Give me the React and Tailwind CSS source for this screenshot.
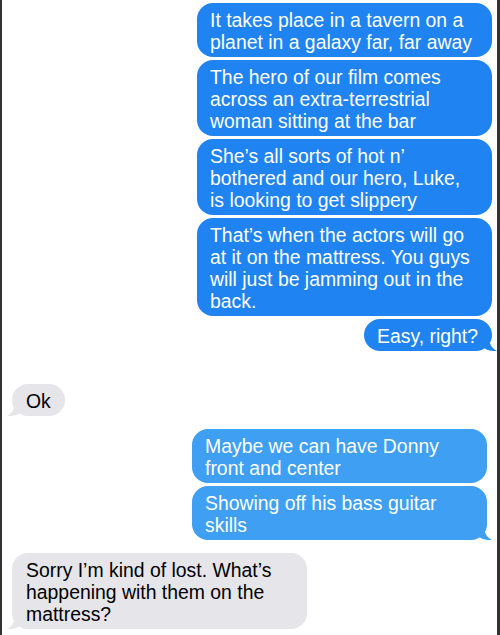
import React from "react";

function Tail({ color, side = "right" }) {
  const pos = side === "right" ? "right-[-5px]" : "left-[-5px] -scale-x-100";
  return (
    <svg
      className={`absolute bottom-0 ${pos}`}
      width="14"
      height="16"
      viewBox="0 0 14 16"
    >
      <path d="M0 0 H6 C6 8 8 13 14 16 C8 16.5 4 15 1 13 H0 Z" fill={color} />
    </svg>
  );
}

function Bubble({ children, className = "", tail, tailColor, tailSide }) {
  return (
    <div className={`relative rounded-[16px] px-[13px] pt-[6px] pb-[4px] text-[19.4px] leading-[22px] ${className}`}>
      {children}
      {tail && <Tail color={tailColor} side={tailSide} />}
    </div>
  );
}

export default function App() {
  const dark = "bg-[#1f84f2] text-white";
  const light = "bg-[#3e9ff3] text-white";
  const grey = "bg-[#e5e5ea] text-black";

  return (
    <div className="w-[500px] h-[635px] overflow-hidden bg-white border-l-2 border-r-[3px] border-[#333333] font-['Liberation_Sans',Arial,sans-serif]">
      <div className="flex flex-col pt-[3px]">
        {/* first run of sent messages */}
        <div className="flex flex-col items-end gap-[3px] pr-[5px]">
          <Bubble className={`w-[295px] ${dark}`}>
            It takes place in a tavern on a<br />planet in a galaxy far, far away
          </Bubble>
          <Bubble className={`w-[295px] ${dark}`}>
            The hero of our film comes<br />across an extra-terrestrial<br />woman sitting at the bar
          </Bubble>
          <Bubble className={`w-[295px] ${dark}`}>
            She’s all sorts of hot n’<br />bothered and our hero, Luke,<br />is looking to get slippery
          </Bubble>
          <Bubble className={`w-[295px] ${dark}`}>
            That’s when the actors will go<br />at it on the mattress. You guys<br />will just be jamming out in the<br />back.
          </Bubble>
          <Bubble className={`pr-[14px] ${dark}`} tail tailColor="#1f84f2">
            Easy, right?
          </Bubble>
        </div>

        {/* reply */}
        <div className="mt-[33px] ml-[10px] self-start">
          <Bubble className={`px-[14px] ${grey}`} tail tailColor="#e5e5ea" tailSide="left">
            Ok
          </Bubble>
        </div>

        {/* second run of sent messages */}
        <div className="mt-[13px] flex flex-col items-end gap-[3px] pr-[10px]">
          <Bubble className={`w-[295px] ${light}`}>
            Maybe we can have Donny<br />front and center
          </Bubble>
          <Bubble className={`w-[295px] ${light}`} tail tailColor="#3e9ff3">
            Showing off his bass guitar<br />skills
          </Bubble>
        </div>

        <div className="mt-[13px] ml-[10px] self-start">
          <Bubble className={`w-[295px] px-[14px] ${grey}`} tail tailColor="#e5e5ea" tailSide="left">
            Sorry I’m kind of lost. What’s<br />happening with them on the<br />mattress?
          </Bubble>
        </div>
      </div>
    </div>
  );
}
